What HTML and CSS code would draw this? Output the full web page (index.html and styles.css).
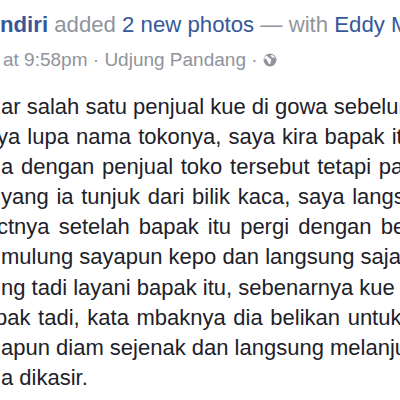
FILE: index.html
```html
<!DOCTYPE html>
<html lang="en">
<head>
  <meta charset="UTF-8" />
  <meta name="viewport" content="width=device-width, initial-scale=1.0"/>
  <title>Post</title>
  <link rel="stylesheet" href="styles.css">
</head>
<body>
  <div class="post">
    <div class="post-header">
      <div class="headline">
        <span class="name">ndiri</span> added <a class="link">2 new photos</a> — with <a class="link">Eddy Mustafa</a>
      </div>
      <div class="meta">
        at 9:58pm · Udjung Pandang ·
        <svg class="globe" width="14" height="14" viewBox="0 0 12 12">
          <circle cx="6" cy="6" r="5.5" fill="#90949c"/>
          <path d="M3 2.2c1 .6 1.1 1.6 2 1.7.7.1.6 1 1.4 1.2.8.2 1 1.2.4 1.9-.5.6-.1 1.6-.7 2.3-.6.5-1.3-.1-1.4-1-.1-.9-1-1.1-1.4-1.8-.4-.7-.1-1.4-.6-1.9C2.2 5.2 1.3 5.6 1 5.2 1.2 3.9 2 2.8 3 2.2zM7.6 1.4c.4.5 1.3.5 1.5 1.2.2.6 1 .7 1.4 1.3-.3.4-1 .2-1.4 0-.5-.2-.9.3-1.4.1-.6-.3-.4-1-.8-1.4-.3-.4.1-1 .7-1.2z" fill="#fff"/>
        </svg>
      </div>
    </div>
    <div class="post-body">
      <div class="line">ar salah satu penjual kue di gowa sebelum</div>
      <div class="line cut wide-1">ya lupa nama tokonya, saya kira bapak itu</div>
      <div class="line wide-2">a dengan penjual toko tersebut tetapi pada</div>
      <div class="line wide-2">yang ia tunjuk dari bilik kaca, saya langsung</div>
      <div class="line cut wide-3">ctnya setelah bapak itu pergi dengan becak</div>
      <div class="line">mulung sayapun kepo dan langsung saja</div>
      <div class="line">ng tadi layani bapak itu, sebenarnya kue</div>
      <div class="line cut-more wide-4">pak tadi, kata mbaknya dia belikan untuk</div>
      <div class="line">apun diam sejenak dan langsung melanjut</div>
      <div class="line">a dikasir.</div>
    </div>
  </div>
</body>
</html>
```

FILE: styles.css
```css
body {
  margin: 0;
  background: #fff;
  font-family: 'Liberation Sans', Arial, sans-serif;
  overflow: hidden;
}

.post {
  width: 400px;
  height: 400px;
  overflow: hidden;
}

.post-header {
  padding-top: 12px;
  white-space: nowrap;
}

.headline {
  font-size: 22.2px;
  line-height: 26px;
  color: #90949c;
}

.name {
  font-weight: bold;
  color: #365899;
}

.link {
  color: #365899;
}

.meta {
  margin-top: 10px;
  padding-left: 3px;
  font-size: 19px;
  line-height: 24px;
  color: #90949c;
}

.globe {
  vertical-align: -1px;
}

.post-body {
  margin-top: 20px;
  font-size: 22px;
  line-height: 30.1px;
  color: #1d2129;
  white-space: nowrap;
}

.line {
  padding-left: 1px;
}

.line.cut {
  padding-left: 0;
  margin-left: -3px;
}

.line.cut-more {
  padding-left: 0;
  margin-left: -5px;
}

/* the original wraps a little looser on some rows */
.wide-1 { word-spacing: 1px; }
.wide-2 { word-spacing: 1.6px; }
.wide-3 { word-spacing: 3px; }
.wide-4 { word-spacing: 1.5px; }
```
